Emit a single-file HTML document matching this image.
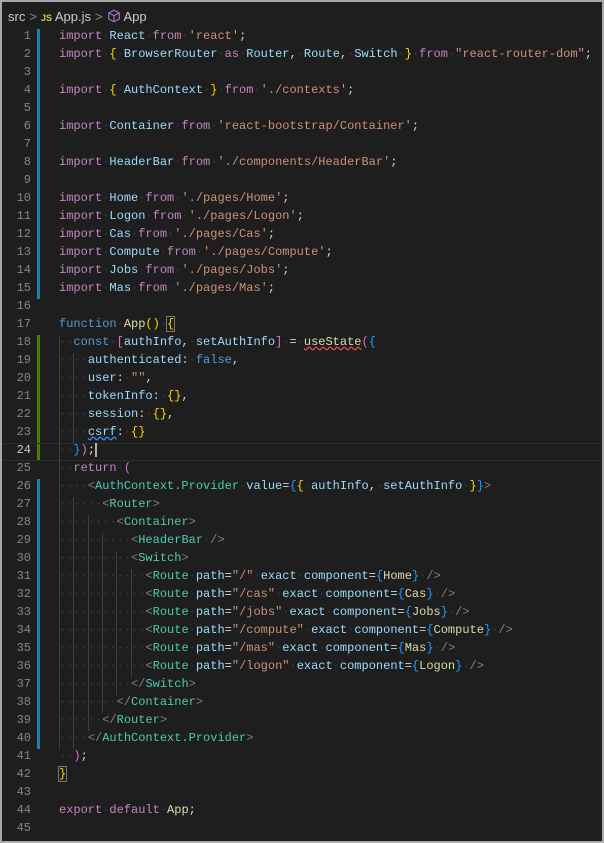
<!DOCTYPE html><html><head><meta charset="utf-8"><style>
body{margin:0;width:604px;height:843px;background:#a9a9a9;overflow:hidden}
#f{position:absolute;left:2px;top:2px;width:600px;height:839px;background:#1e1e1e;overflow:hidden}
#bc{position:absolute;left:6px;top:7px;font:13px "Liberation Sans",sans-serif;color:#cccccc;white-space:nowrap}
#bc .sep{color:#888;margin:0 4px}
.row{position:absolute;left:0;height:18px;line-height:18px;width:600px}
.ln{position:absolute;left:0;width:29px;text-align:right;color:#858585;font:12px "Liberation Mono",monospace}
.code{position:absolute;left:57px;font:12px "Liberation Mono",monospace;white-space:pre;color:#d4d4d4}
.d{color:#3e3e3e}
.k{color:#c586c0}.v{color:#9cdcfe}.s{color:#ce9178}.b{color:#569cd6}.fn{color:#dcdcaa}.t{color:#4ec9b0}.g{color:#808080}.y{color:#ffd700}.p{color:#da70d6}.br{color:#179fff}
.bar{position:absolute;left:35px;width:3px}
.gd{position:absolute;width:1px;background:#404040}
</style></head><body><div id="f">
<div id="bc">src<span class="sep">&gt;</span><span style="color:#cbcb41;font-size:9px;font-weight:bold">JS</span> App.js<span class="sep">&gt;</span><svg width="14" height="14" viewBox="0 0 16 16" style="vertical-align:-2px"><path d="M8 1.5 14 4.5v7L8 14.5 2 11.5v-7zM2 4.5 8 7.5 14 4.5M8 7.5v7" fill="none" stroke="#b180d7" stroke-width="1.2"/></svg> App</div>
<div class="bar" style="top:27px;height:270px;background:#1b81a8"></div>
<div class="bar" style="top:333px;height:126px;background:#487e02"></div>
<div class="bar" style="top:477px;height:270px;background:#1b81a8"></div>
<div class="row" style="top:441px;border-top:1px solid #2c2c2c;border-bottom:1px solid #2c2c2c;height:16px"></div>
<div class="gd" style="left:57px;top:333px;height:414px"></div>
<div class="gd" style="left:71px;top:351px;height:90px"></div>
<div class="gd" style="left:71px;top:495px;height:252px"></div>
<div class="gd" style="left:86px;top:513px;height:216px"></div>
<div class="gd" style="left:100px;top:531px;height:180px"></div>
<div class="gd" style="left:114px;top:549px;height:144px"></div>
<div class="gd" style="left:129px;top:567px;height:108px"></div>
<div id="lines"></div>
</div>
<script>
var L=[
'<span class="k">import</span> <span class="v">React</span> <span class="k">from</span> <span class="s">\'react\'</span>;',
'<span class="k">import</span> <span class="y">{</span> <span class="v">BrowserRouter</span> <span class="k">as</span> <span class="v">Router</span>, <span class="v">Route</span>, <span class="v">Switch</span> <span class="y">}</span> <span class="k">from</span> <span class="s">"react-router-dom"</span>;',
'',
'<span class="k">import</span> <span class="y">{</span> <span class="v">AuthContext</span> <span class="y">}</span> <span class="k">from</span> <span class="s">\'./contexts\'</span>;',
'',
'<span class="k">import</span> <span class="v">Container</span> <span class="k">from</span> <span class="s">\'react-bootstrap/Container\'</span>;',
'',
'<span class="k">import</span> <span class="v">HeaderBar</span> <span class="k">from</span> <span class="s">\'./components/HeaderBar\'</span>;',
'',
'<span class="k">import</span> <span class="v">Home</span> <span class="k">from</span> <span class="s">\'./pages/Home\'</span>;',
'<span class="k">import</span> <span class="v">Logon</span> <span class="k">from</span> <span class="s">\'./pages/Logon\'</span>;',
'<span class="k">import</span> <span class="v">Cas</span> <span class="k">from</span> <span class="s">\'./pages/Cas\'</span>;',
'<span class="k">import</span> <span class="v">Compute</span> <span class="k">from</span> <span class="s">\'./pages/Compute\'</span>;',
'<span class="k">import</span> <span class="v">Jobs</span> <span class="k">from</span> <span class="s">\'./pages/Jobs\'</span>;',
'<span class="k">import</span> <span class="v">Mas</span> <span class="k">from</span> <span class="s">\'./pages/Mas\'</span>;',
'',
'<span class="b">function</span> <span class="fn">App</span><span class="y">()</span> <span class="y" style="outline:1px solid #777">{</span>',
'  <span class="b">const</span> <span class="p">[</span><span class="v">authInfo</span>, <span class="v">setAuthInfo</span><span class="p">]</span> = <span class="fn" style="text-decoration:underline wavy #f14c4c">useState</span><span class="p">(</span><span class="br">{</span>',
'    <span class="v">authenticated</span>: <span class="b">false</span>,',
'    <span class="v">user</span>: <span class="s">""</span>,',
'    <span class="v">tokenInfo</span>: <span class="y">{}</span>,',
'    <span class="v">session</span>: <span class="y">{}</span>,',
'    <span class="v" style="text-decoration:underline wavy #3794ff">csrf</span>: <span class="y">{}</span>',
'  <span class="br">}</span><span class="p">)</span>;<span style="border-left:2px solid #aeafad"></span>',
'  <span class="k">return</span> <span class="p">(</span>',
'    <span class="g">&lt;</span><span class="t">AuthContext.Provider</span> <span class="v">value</span>=<span class="br">{</span><span class="y">{</span> <span class="v">authInfo</span>, <span class="v">setAuthInfo</span> <span class="y">}</span><span class="br">}</span><span class="g">&gt;</span>',
'      <span class="g">&lt;</span><span class="t">Router</span><span class="g">&gt;</span>',
'        <span class="g">&lt;</span><span class="t">Container</span><span class="g">&gt;</span>',
'          <span class="g">&lt;</span><span class="t">HeaderBar</span> <span class="g">/&gt;</span>',
'          <span class="g">&lt;</span><span class="t">Switch</span><span class="g">&gt;</span>',
'R"/"@Home@',
'R"/cas"@Cas@',
'R"/jobs"@Jobs@',
'R"/compute"@Compute@',
'R"/mas"@Mas@',
'R"/logon"@Logon@',
'          <span class="g">&lt;/</span><span class="t">Switch</span><span class="g">&gt;</span>',
'        <span class="g">&lt;/</span><span class="t">Container</span><span class="g">&gt;</span>',
'      <span class="g">&lt;/</span><span class="t">Router</span><span class="g">&gt;</span>',
'    <span class="g">&lt;/</span><span class="t">AuthContext.Provider</span><span class="g">&gt;</span>',
'  <span class="p">)</span>;',
'<span class="y" style="outline:1px solid #777">}</span>',
'',
'<span class="k">export</span> <span class="k">default</span> <span class="fn">App</span>;',
''];
var h='';
L.forEach(function(s,i){
 if(s[0]=='R'){var m=s.match(/R(".*")@(.*)@/);s='            <span class="g">&lt;</span><span class="t">Route</span> <span class="v">path</span>=<span class="s">'+m[1]+'</span> <span class="v">exact</span> <span class="v">component</span>=<span class="br">{</span><span class="fn">'+m[2]+'</span><span class="br">}</span> <span class="g">/&gt;</span>';}
 h+='<div class="row" style="top:'+(26+i*18+1)+'px"><span class="ln"'+(i==23?' style="color:#c6c6c6"':'')+'>'+(i+1)+'</span><span class="code">'+s+'</span></div>';
});
var c=document.getElementById('lines');c.innerHTML=h;
function walk(n){if(n.nodeType==3){if(n.nodeValue.indexOf(' ')>=0){var f=document.createDocumentFragment();n.nodeValue.split(/( )/).forEach(function(p){if(p==' '){var e=document.createElement('span');e.className='d';e.textContent='·';f.appendChild(e);}else if(p)f.appendChild(document.createTextNode(p));});n.parentNode.replaceChild(f,n);}}else{[].slice.call(n.childNodes).forEach(walk);}}
[].forEach.call(document.querySelectorAll('.code'),walk);
</script>
</body></html>
